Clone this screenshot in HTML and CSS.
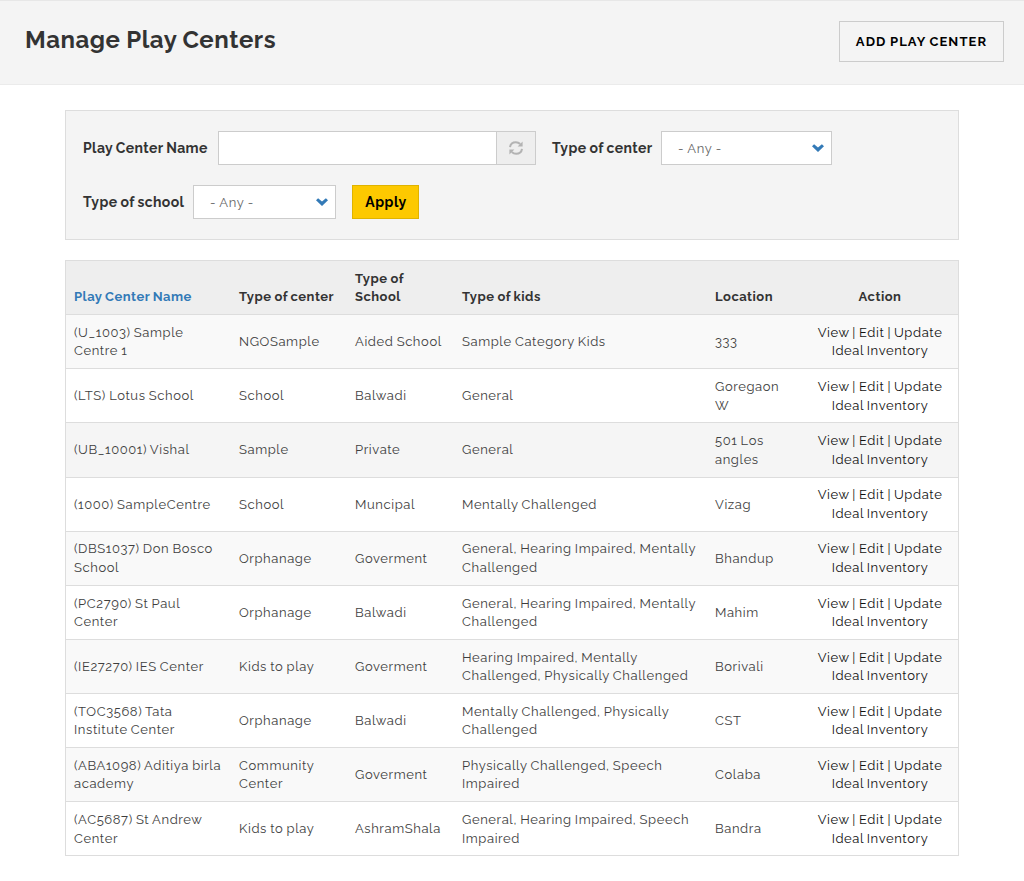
FILE: index.html
```html
<!DOCTYPE html>
<html lang="en">
<head>
<meta charset="utf-8">
<title>Manage Play Centers</title>
<link rel="stylesheet" href="styles.css">
</head>
<body>
<header class="page-header">
  <h1 class="page-title">Manage Play Centers</h1>
  <a class="add-button">ADD PLAY CENTER</a>
</header>
<main class="content">
  <form class="filters">
    <div class="filter-row">
      <label class="filter-label label-name">Play Center Name</label>
      <div class="search-group">
        <input class="search-input" type="text" aria-label="Play Center Name">
        <span class="search-addon">
          <svg class="refresh-icon" width="14" height="14" viewBox="0 0 14 14" fill="none" stroke="#b3b3b3" stroke-width="2"><path d="M1 6.1C1.4 3.2 3.8 1.2 6.9 1.2c1.7 0 3.1.6 4.3 1.8M13 7.9c-.4 2.9-2.8 4.9-5.9 4.9-1.7 0-3.1-.6-4.3-1.8"/><path fill="#b3b3b3" stroke="none" d="M13.6.4v5H8.6zM.4 13.6v-5h5z"/></svg>
        </span>
      </div>
      <label class="filter-label label-center">Type of center</label>
      <div class="select select-center"><span>- Any -</span><svg class="chevron" width="12" height="8" viewBox="0 0 12 8"><path fill="#337ab7" d="M2.1.2 6 3.6 9.9.2 12 2.2 6 8 0 2.2z"/></svg></div>
    </div>
    <div class="filter-row">
      <label class="filter-label label-school">Type of school</label>
      <div class="select select-school"><span>- Any -</span><svg class="chevron" width="12" height="8" viewBox="0 0 12 8"><path fill="#337ab7" d="M2.1.2 6 3.6 9.9.2 12 2.2 6 8 0 2.2z"/></svg></div>
      <button class="apply" type="button">Apply</button>
    </div>
  </form>
  <div class="table-frame">
    <table class="centers">
      <colgroup><col class="c-name"><col class="c-center"><col class="c-school"><col class="c-kids"><col class="c-location"><col class="c-action"></colgroup>
      <thead>
        <tr><th><a class="sort">Play Center Name</a></th><th>Type of center</th><th>Type of<br>School</th><th>Type of kids</th><th>Location</th><th class="action">Action</th></tr>
      </thead>
      <tbody>
        <tr><td>(U_1003) Sample<br>Centre 1</td><td>NGOSample</td><td>Aided School</td><td>Sample Category Kids</td><td>333</td><td class="action">View | Edit | Update<br>Ideal Inventory</td></tr>
        <tr><td>(LTS) Lotus School</td><td>School</td><td>Balwadi</td><td>General</td><td>Goregaon<br>W</td><td class="action">View | Edit | Update<br>Ideal Inventory</td></tr>
        <tr class="hovered"><td>(UB_10001) Vishal</td><td>Sample</td><td>Private</td><td>General</td><td>501 Los<br>angles</td><td class="action">View | Edit | Update<br>Ideal Inventory</td></tr>
        <tr><td>(1000) SampleCentre</td><td>School</td><td>Muncipal</td><td>Mentally Challenged</td><td>Vizag</td><td class="action">View | Edit | Update<br>Ideal Inventory</td></tr>
        <tr><td>(DBS1037) Don Bosco<br>School</td><td>Orphanage</td><td>Goverment</td><td>General, Hearing Impaired, Mentally<br>Challenged</td><td>Bhandup</td><td class="action">View | Edit | Update<br>Ideal Inventory</td></tr>
        <tr><td>(PC2790) St Paul<br>Center</td><td>Orphanage</td><td>Balwadi</td><td>General, Hearing Impaired, Mentally<br>Challenged</td><td>Mahim</td><td class="action">View | Edit | Update<br>Ideal Inventory</td></tr>
        <tr><td>(IE27270) IES Center</td><td>Kids to play</td><td>Goverment</td><td>Hearing Impaired, Mentally<br>Challenged, Physically Challenged</td><td>Borivali</td><td class="action">View | Edit | Update<br>Ideal Inventory</td></tr>
        <tr><td>(TOC3568) Tata<br>Institute Center</td><td>Orphanage</td><td>Balwadi</td><td>Mentally Challenged, Physically<br>Challenged</td><td>CST</td><td class="action">View | Edit | Update<br>Ideal Inventory</td></tr>
        <tr><td>(ABA1098) Aditiya birla<br>academy</td><td>Community<br>Center</td><td>Goverment</td><td>Physically Challenged, Speech<br>Impaired</td><td>Colaba</td><td class="action">View | Edit | Update<br>Ideal Inventory</td></tr>
        <tr><td>(AC5687) St Andrew<br>Center</td><td>Kids to play</td><td>AshramShala</td><td>General, Hearing Impaired, Speech<br>Impaired</td><td>Bandra</td><td class="action">View | Edit | Update<br>Ideal Inventory</td></tr>
      </tbody>
    </table>
  </div>
</main>
</body>
</html>
```
FILE: styles.css
```css
* { box-sizing: border-box; }
body {
  margin: 0;
  background: #fff;
  color: #3e3e3e;
  font: 13px/1.428571 Raleway, Lato, sans-serif;
  letter-spacing: 0.6px;
  word-spacing: -0.7px;
}
.page-header {
  display: flex;
  justify-content: space-between;
  align-items: flex-start;
  height: 85px;
  padding: 20px 20px 0 25px;
  background: #f4f4f4;
  border-top: 1px solid #e7e7e7;
  border-bottom: 1px solid #ebebeb;
}
.page-title {
  margin: 3px 0 0;
  color: #333;
  font-size: 24px;
  line-height: 32px;
  font-weight: 700;
  letter-spacing: 0.55px;
}
.add-button {
  width: 165px;
  height: 41px;
  border: 1px solid #ccc;
  color: #000;
  font-weight: 700;
  line-height: 39px;
  letter-spacing: 1.1px;
  text-align: center;
  white-space: nowrap;
}
.content { padding: 25px 65px 0; }
.filters {
  display: flex;
  flex-direction: column;
  gap: 20px;
  height: 130px;
  padding: 20px 17px;
  background: #f4f4f4;
  border: 1px solid #ddd;
}
.filter-row { display: flex; height: 34px; }
.filter-label {
  color: #333;
  font-size: 14px;
  font-weight: 700;
  line-height: 35px;
  letter-spacing: 0.37px;
  white-space: nowrap;
}
.label-name { width: 135px; }
.label-center { width: 109px; }
.label-school { width: 110px; }
.search-group { display: flex; width: 318px; margin-right: 16px; }
.search-input {
  width: 278px;
  padding: 6px 12px;
  border: 1px solid #ccc;
  border-right: 0;
  background: #fff;
}
.search-addon {
  display: flex;
  align-items: center;
  justify-content: center;
  flex: 1;
  border: 1px solid #ccc;
  background: #eee;
}
.select {
  display: flex;
  align-items: center;
  justify-content: space-between;
  padding: 0 7px 0 16px;
  border: 1px solid #ccc;
  background: #fff;
  color: #666;
  word-spacing: -0.3px;
}
.select span { padding-top: 2px; }
.select-center { width: 171px; }
.select-school { width: 143px; margin-right: 16px; }
.apply {
  width: 67px;
  padding: 0 0 0 1px;
  border: 1px solid #dfb300;
  background: #fdc900;
  color: #000;
  font: 700 14px/30px Raleway, Lato, sans-serif;
  letter-spacing: 0.5px;
}
.table-frame { margin-top: 20px; border: 1px solid #ddd; }
.centers {
  width: 892px;
  table-layout: fixed;
  border-collapse: separate;
  border-spacing: 0;
}
.c-name { width: 165px; }
.c-center { width: 116px; }
.c-school { width: 107px; }
.c-kids { width: 253px; }
.c-location { width: 95px; }
.c-action { width: 156px; }
.centers th, .centers td {
  padding: 8.75px 8px 7.25px;
  text-align: left;
  vertical-align: middle;
  white-space: nowrap;
}
.centers th {
  background: #eee;
  color: #333;
  letter-spacing: 0.48px;
  vertical-align: bottom;
}
.centers td { border-top: 1px solid #ddd; }
.centers tbody tr:nth-child(odd) { background: #f9f9f9; }
.centers tbody tr.hovered { background: #f5f5f5; }
.sort { color: #337ab7; }
.centers .action { text-align: center; }
.centers td.action { color: #111; word-spacing: -0.9px; }
```
